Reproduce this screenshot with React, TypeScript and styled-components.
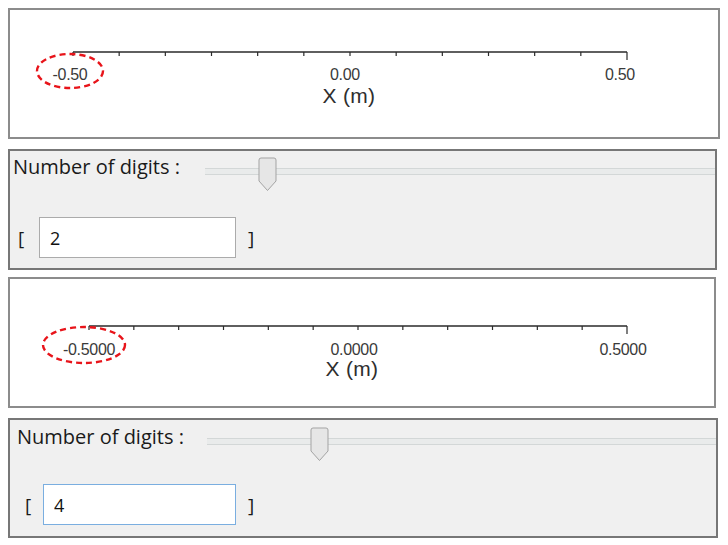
import React from 'react';
import styled, { createGlobalStyle } from 'styled-components';

const GlobalStyle = createGlobalStyle`
  html, body {
    margin: 0;
    padding: 0;
    background: #ffffff;
  }
  body {
    font-family: 'Open Sans', 'Noto Sans', Arial, sans-serif;
  }
`;

type AxisConfig = {
  top: number;
  width: number;
  height: number;
  originY: number;
  x0: number;
  x1: number;
  lineY: number;
  labels: { text: string; x: number }[];
  labelY: number;
  titleX: number;
  titleY: number;
  mark: { cx: number; cy: number; rx: number; ry: number };
};

type ControlConfig = {
  top: number;
  width: number;
  height: number;
  labelPad: number;
  trackStart: number;
  padTop: number;
  rowGap: number;
  bracketX: number;
  inputX: number;
  inputW: number;
  digits: number;
  focused: boolean;
};

const axes: AxisConfig[] = [
  {
    top: 0,
    width: 712,
    height: 131,
    originY: 10,
    x0: 73,
    x1: 627,
    lineY: 52,
    labels: [
      { text: '-0.50', x: 70 },
      { text: '0.00', x: 345 },
      { text: '0.50', x: 620 },
    ],
    labelY: 80,
    titleX: 349,
    titleY: 103,
    mark: { cx: 70, cy: 71, rx: 33, ry: 17 },
  },
  {
    top: 7,
    width: 708,
    height: 131,
    originY: 279,
    x0: 89,
    x1: 627,
    lineY: 326,
    labels: [
      { text: '-0.5000', x: 89 },
      { text: '0.0000', x: 354 },
      { text: '0.5000', x: 623 },
    ],
    labelY: 355,
    titleX: 352,
    titleY: 376,
    mark: { cx: 84, cy: 345, rx: 41, ry: 18 },
  },
];

const controls: ControlConfig[] = [
  {
    top: 10,
    width: 709,
    height: 121,
    labelPad: 3,
    trackStart: 205,
    padTop: 2,
    rowGap: 26,
    bracketX: 18,
    inputX: 39,
    inputW: 197,
    digits: 2,
    focused: false,
  },
  {
    top: 10,
    width: 710,
    height: 120,
    labelPad: 7,
    trackStart: 207,
    padTop: 3,
    rowGap: 23,
    bracketX: 25,
    inputX: 43,
    inputW: 193,
    digits: 4,
    focused: true,
  },
];

const AxisPlot: React.FC<{ cfg: AxisConfig }> = ({ cfg }) => {
  const innerW = cfg.width - 4;
  const innerH = cfg.height - 4;
  const step = (cfg.x1 - cfg.x0) / 12;
  const ticks = Array.from({ length: 13 }, (_, i) => cfg.x0 + i * step);
  return (
    <PlotPanelS $top={cfg.top} $w={cfg.width} $h={cfg.height}>
      <svg width={innerW} height={innerH} viewBox={`10 ${cfg.originY} ${innerW} ${innerH}`}>
        <line x1={cfg.x0} y1={cfg.lineY} x2={cfg.x1} y2={cfg.lineY} stroke="#2a2a2a" strokeWidth={1.4} />
        {ticks.map((x, i) => (
          <line
            key={i}
            x1={x}
            y1={cfg.lineY}
            x2={x}
            y2={cfg.lineY + (i === 12 ? 8 : 4)}
            stroke="#2a2a2a"
            strokeWidth={1.2}
          />
        ))}
        {cfg.labels.map((l) => (
          <TickLabelS key={l.text} x={l.x} y={cfg.labelY} textAnchor="middle">
            {l.text}
          </TickLabelS>
        ))}
        <TitleS x={cfg.titleX} y={cfg.titleY} textAnchor="middle">
          X (m)
        </TitleS>
        <ellipse
          cx={cfg.mark.cx}
          cy={cfg.mark.cy}
          rx={cfg.mark.rx}
          ry={cfg.mark.ry}
          fill="none"
          stroke="#e8141a"
          strokeWidth={2.4}
          strokeDasharray="6 4"
        />
      </svg>
    </PlotPanelS>
  );
};

const DigitsControl: React.FC<{ cfg: ControlConfig }> = ({ cfg }) => {
  // thumb offset along the track, from the current digit count
  const thumbLeft = 3 + cfg.digits * 25;
  return (
    <ControlPanelS $top={cfg.top} $w={cfg.width} $h={cfg.height}>
      <SliderRowS $padTop={cfg.padTop} $pad={cfg.labelPad}>
        <LabelS $w={cfg.trackStart - 10 - cfg.labelPad}>Number of digits :</LabelS>
        <SliderS>
          <TrackS />
          <ThumbS style={{ left: thumbLeft }}>
            <svg width="19" height="35" viewBox="0 0 19 35">
              <path
                d="M3 1 H16 Q18 1 18 3 V24 L9.5 33.5 L1 24 V3 Q1 1 3 1 Z"
                fill="#e6e6e6"
                stroke="#a3a3a3"
                strokeWidth="1"
              />
            </svg>
          </ThumbS>
        </SliderS>
      </SliderRowS>
      <InputRowS $gap={cfg.rowGap} $pad={cfg.bracketX - 10}>
        <BracketS $w={cfg.inputX - cfg.bracketX}>[</BracketS>
        <DigitsInputS readOnly value={String(cfg.digits)} $w={cfg.inputW} $focused={cfg.focused} />
        <BracketS $w={20} $left={12}>]</BracketS>
      </InputRowS>
    </ControlPanelS>
  );
};

export default function App() {
  return (
    <>
      <GlobalStyle />
      <PageS>
        <AxisPlot cfg={axes[0]} />
        <DigitsControl cfg={controls[0]} />
        <AxisPlot cfg={axes[1]} />
        <DigitsControl cfg={controls[1]} />
      </PageS>
    </>
  );
}

const PageS = styled.div`
  display: flex;
  flex-direction: column;
  align-items: flex-start;
  padding: 8px;
`;

const PlotPanelS = styled.div<{ $top: number; $w: number; $h: number }>`
  box-sizing: border-box;
  margin-top: ${(p) => p.$top}px;
  width: ${(p) => p.$w}px;
  height: ${(p) => p.$h}px;
  border: 2px solid #8c8c8c;
  background: #ffffff;
  svg {
    display: block;
  }
`;

const TickLabelS = styled.text`
  font-family: 'Liberation Sans', Arial, sans-serif;
  font-size: 16px;
  fill: #3a3a3a;
  letter-spacing: -0.3px;
`;

const TitleS = styled.text`
  font-family: 'Liberation Sans', Arial, sans-serif;
  font-size: 21px;
  fill: #2e2e2e;
  letter-spacing: 0.3px;
`;

const ControlPanelS = styled.div<{ $top: number; $w: number; $h: number }>`
  box-sizing: border-box;
  margin-top: ${(p) => p.$top}px;
  width: ${(p) => p.$w}px;
  height: ${(p) => p.$h}px;
  border: 2px solid #777777;
  background: #f0f0f0;
  display: flex;
  flex-direction: column;
`;

const SliderRowS = styled.div<{ $padTop: number; $pad: number }>`
  display: flex;
  align-items: flex-start;
  height: 38px;
  padding: ${(p) => p.$padTop}px 0 0 ${(p) => p.$pad}px;
`;

const LabelS = styled.div<{ $w: number }>`
  width: ${(p) => p.$w}px;
  flex: none;
  font-size: 20px;
  line-height: 27px;
  color: #1a1a1a;
  white-space: nowrap;
`;

const SliderS = styled.div`
  position: relative;
  flex: 1;
  height: 38px;
`;

const TrackS = styled.div`
  margin-top: 15px;
  height: 5px;
  background: #e9ebeb;
  border-top: 1px solid #d3d7d7;
  border-bottom: 1px solid #d3d7d7;
`;

const ThumbS = styled.div`
  position: absolute;
  top: 4px;
  width: 19px;
  height: 35px;
  svg {
    display: block;
  }
`;

const InputRowS = styled.div<{ $gap: number; $pad: number }>`
  display: flex;
  align-items: center;
  margin-top: ${(p) => p.$gap}px;
  padding-left: ${(p) => p.$pad}px;
`;

const BracketS = styled.span<{ $w: number; $left?: number }>`
  width: ${(p) => p.$w}px;
  margin-left: ${(p) => p.$left ?? 0}px;
  flex: none;
  font-size: 19px;
  color: #1a1a1a;
`;

const DigitsInputS = styled.input<{ $w: number; $focused: boolean }>`
  box-sizing: border-box;
  width: ${(p) => p.$w}px;
  height: 41px;
  margin: 0;
  padding: 0 0 0 10px;
  border: 1px solid ${(p) => (p.$focused ? '#7aaee0' : '#ababab')};
  background: #ffffff;
  font-family: 'Open Sans', 'Noto Sans', Arial, sans-serif;
  font-size: 18px;
  color: #111111;
  outline: none;
`;
